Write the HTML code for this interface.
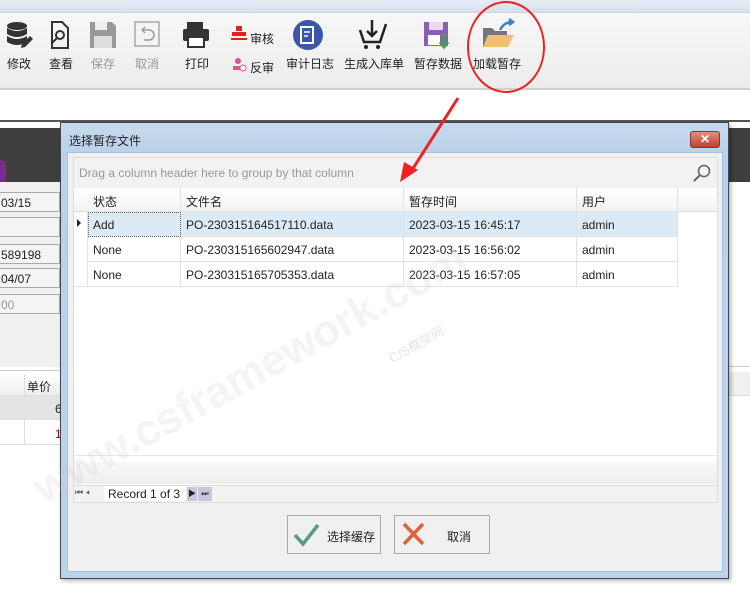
<!DOCTYPE html>
<html><head><meta charset="utf-8"><style>
*{margin:0;padding:0;box-sizing:border-box}
body{width:750px;height:595px;overflow:hidden;background:#fff;position:relative;font-family:"Liberation Sans","Noto Sans CJK SC",sans-serif;font-size:12px;color:#222}
.a{position:absolute}
.lbl{position:absolute;top:55px;font-size:12px;color:#222;white-space:nowrap}
.f{position:absolute;left:0;width:60px;height:20px;border:1px solid #aaa;border-left:none;background:#f4f4f4;font-size:12px;padding:3px 0 0 1px}
.cell{position:absolute;height:25px;border-right:1px solid #e2e2e2;border-bottom:1px solid #e2e2e2;padding:6px 0 0 5px;font-size:12px;white-space:nowrap}
</style></head><body>
<div class="a" style="left:0;top:0;width:750px;height:12px;background:linear-gradient(#e6edf5,#d6e1ed)"></div>
<div class="a" style="left:0;top:12px;width:750px;height:78px;background:linear-gradient(#f7f7f7,#ececec);border-top:1px solid #cdd6e0;border-bottom:2px solid #d0d0d0"></div>
<div class="a" style="left:0;top:120px;width:750px;height:2px;background:#555"></div>

<svg class="a" style="left:0;top:18px" width="560" height="36">
 <g fill="#333"><ellipse cx="17" cy="8" rx="10" ry="4"/><path d="M7 10q10 6 20 0v6q-10 6-20 0z"/><path d="M7 18q10 6 20 0v6q-10 6-20 0z"/></g>
 <path d="M22 26l8-8 3 3-8 8-4 1z" fill="#333"/>
 <path d="M52 4h10l6 6v20h-16z" fill="none" stroke="#333" stroke-width="2"/>
 <circle cx="60" cy="17" r="4" fill="none" stroke="#333" stroke-width="2"/><path d="M57 20l-5 5" stroke="#333" stroke-width="2"/>
 <path d="M90 4h22l4 4v22h-26z" fill="#999"/><rect x="95" y="4" width="12" height="8" fill="#eee"/><rect x="94" y="18" width="18" height="12" fill="#ddd"/>
 <rect x="135" y="4" width="24" height="24" fill="#f4f4f4" stroke="#aaa" stroke-width="1.5"/><path d="M142 12h7a5 5 0 010 10h-5M142 12l3-3M142 12l3 3" fill="none" stroke="#999" stroke-width="1.5"/>
 <rect x="187" y="4" width="16" height="8" fill="#333"/><rect x="183" y="11" width="26" height="12" rx="2" fill="#333"/><rect x="188" y="19" width="16" height="10" fill="#fff" stroke="#333" stroke-width="2"/>
 <path d="M236 8h6v5h-6z M232 14h14v4h-14z" fill="#d22"/><rect x="231" y="20" width="16" height="2" fill="#d22"/>
 <circle cx="308" cy="17" r="15" fill="#3b55a8"/><path d="M301 9h12v16h-12z" fill="none" stroke="#fff" stroke-width="2"/><path d="M304 14h6M304 18h4" stroke="#fff" stroke-width="1.5"/>
 <path d="M372 2v16M367 13l5 5 5-5" fill="none" stroke="#222" stroke-width="2.5"/><path d="M360 12l4 12h16l6-18" fill="none" stroke="#222" stroke-width="2.5"/><circle cx="366" cy="29" r="2" fill="#222"/><circle cx="378" cy="29" r="2" fill="#222"/>
 <path d="M424 4h24v24h-24z" fill="#8b5fb0"/><rect x="429" y="4" width="14" height="8" fill="#e8d8f2"/><rect x="428" y="17" width="12" height="10" fill="#fff"/><path d="M444 16v12M440 24l4 5 4-5" stroke="#4a9a5a" stroke-width="3" fill="none"/>
 <path d="M483 10h9l3 3h12v16h-24z" fill="#777"/><path d="M483 29l5-12h26l-6 12z" fill="#f0c070"/><path d="M500 12q4-8 12-8M509 1l4 3-4 3" fill="none" stroke="#3a80c8" stroke-width="2.5"/>
</svg>
<svg class="a" style="left:230px;top:56px" width="18" height="18"><circle cx="8" cy="5" r="3" fill="#e0509a"/><path d="M3 14h11v-4h-11z" fill="#e0509a"/><circle cx="13" cy="12" r="3" fill="#fff" stroke="#e0509a"/></svg>
<div class="lbl" style="left:7px">修改</div>
<div class="lbl" style="left:49px">查看</div>
<div class="lbl" style="left:91px;color:#999">保存</div>
<div class="lbl" style="left:135px;color:#999">取消</div>
<div class="lbl" style="left:185px">打印</div>
<div class="lbl" style="left:250px;top:30px">审核</div>
<div class="lbl" style="left:250px;top:59px">反审</div>
<div class="lbl" style="left:286px">审计日志</div>
<div class="lbl" style="left:344px">生成入库单</div>
<div class="lbl" style="left:414px">暂存数据</div>
<div class="lbl" style="left:473px">加载暂存</div>

<div class="a" style="left:0;top:128px;width:62px;height:54px;background:#3e3e3e"></div>
<div class="a" style="left:0;top:160px;width:6px;height:22px;background:#7a2a90;border-radius:0 10px 0 0"></div>
<div class="a" style="left:0;top:182px;width:62px;height:185px;background:#f0f0f0"></div>
<div class="f" style="top:192px">03/15</div>
<div class="f" style="top:217px"></div>
<div class="f" style="top:244px">589198</div>
<div class="f" style="top:268px">04/07</div>
<div class="f" style="top:294px;color:#999">00</div>
<div class="a" style="left:0;top:370px;width:62px;height:1px;background:#ccc"></div>
<div class="a" style="left:0;top:374px;width:62px;height:22px;background:linear-gradient(#fff,#eee);border-bottom:1px solid #ddd"></div>
<div class="a" style="left:27px;top:378px">单价</div>
<div class="a" style="left:24px;top:374px;width:1px;height:71px;background:#ddd"></div>
<div class="a" style="left:0;top:396px;width:62px;height:24px;background:#e4e4e4;border-bottom:1px solid #ddd"></div>
<div class="a" style="left:55px;top:402px">6</div>
<div class="a" style="left:0;top:420px;width:62px;height:25px;border-bottom:1px solid #ddd"></div>
<div class="a" style="left:55px;top:427px;color:#800">1</div>
<div class="a" style="left:728px;top:128px;width:22px;height:54px;background:#3e3e3e"></div>
<div class="a" style="left:728px;top:366px;width:22px;height:1px;background:#ccc"></div>
<div class="a" style="left:728px;top:372px;width:22px;height:24px;background:#f0f0f0;border-bottom:1px solid #ddd"></div>

<div class="a" style="left:60px;top:122px;width:669px;height:457px;background:linear-gradient(#c8daee,#b9d1ea 30px,#bcd3ec);border:1px solid #445;box-shadow:2px 2px 4px rgba(0,0,0,.3)"></div>
<div class="a" style="left:69px;top:132px;font-size:12px">选择暂存文件</div>
<div class="a" style="left:690px;top:131px;width:30px;height:17px;border-radius:3px;background:linear-gradient(#e09080,#c0402e);border:1px solid #833;color:#fff;font-size:12px;font-weight:bold;text-align:center;line-height:15px">✕</div>
<div class="a" style="left:67px;top:152px;width:656px;height:420px;background:#f0f0f0;border:1px solid #a9c0d8"></div>
<div class="a" style="left:73px;top:157px;width:645px;height:346px;background:#fff;border:1px solid #ddd"></div>
<div class="a" style="left:74px;top:158px;width:643px;height:30px;background:#f2f2f2"></div>
<div class="a" style="left:79px;top:166px;color:#999">Drag a column header here to group by that column</div>
<svg class="a" style="left:692px;top:163px" width="20" height="20"><circle cx="12" cy="8" r="5.5" fill="none" stroke="#666" stroke-width="1.6"/><path d="M8 12l-6 6" stroke="#666" stroke-width="2"/></svg>
<div class="a" style="left:74px;top:188px;width:643px;height:24px;background:linear-gradient(#fff,#f2f2f2);border-bottom:1px solid #ddd"></div>
<div class="cell" style="left:88px;top:188px;width:93px;height:24px;padding-top:5px">状态</div>
<div class="cell" style="left:181px;top:188px;width:223px;height:24px;padding-top:5px">文件名</div>
<div class="cell" style="left:404px;top:188px;width:173px;height:24px;padding-top:5px">暂存时间</div>
<div class="cell" style="left:577px;top:188px;width:101px;height:24px;padding-top:5px">用户</div>

<div class="a" style="left:88px;top:212px;width:590px;height:25px;background:#dbeaf5"></div>
<div class="a" style="left:77px;top:219px;width:0;height:0;border-left:4px solid #222;border-top:4px solid transparent;border-bottom:4px solid transparent"></div>
<div class="a" style="left:73px;top:212px;width:15px;height:74px;border-right:1px solid #e2e2e2"></div>
<div class="cell" style="left:88px;top:212px;width:93px;outline:1px dotted #666;outline-offset:-1px">Add</div>
<div class="cell" style="left:181px;top:212px;width:223px">PO-230315164517110.data</div>
<div class="cell" style="left:404px;top:212px;width:173px">2023-03-15 16:45:17</div>
<div class="cell" style="left:577px;top:212px;width:101px">admin</div>
<div class="cell" style="left:88px;top:237px;width:93px">None</div>
<div class="cell" style="left:181px;top:237px;width:223px">PO-230315165602947.data</div>
<div class="cell" style="left:404px;top:237px;width:173px">2023-03-15 16:56:02</div>
<div class="cell" style="left:577px;top:237px;width:101px">admin</div>
<div class="cell" style="left:88px;top:262px;width:93px">None</div>
<div class="cell" style="left:181px;top:262px;width:223px">PO-230315165705353.data</div>
<div class="cell" style="left:404px;top:262px;width:173px">2023-03-15 16:57:05</div>
<div class="cell" style="left:577px;top:262px;width:101px">admin</div>
<div class="a" style="left:74px;top:286px;width:604px;height:1px;background:#e2e2e2"></div>

<div class="a" style="left:74px;top:455px;width:643px;height:1px;background:#e6e6e6"></div>
<div class="a" style="left:74px;top:462px;width:643px;height:22px;background:linear-gradient(#f8f8f8,#eee)"></div>
<div class="a" style="left:74px;top:485px;width:643px;height:17px;background:#f2f2f2;border-top:1px solid #ddd"></div>
<div class="a" style="left:75px;top:487px;font-size:9px;color:#555">⏮ ◂</div>
<div class="a" style="left:104px;top:486px;width:82px;height:15px;background:#fff;padding:1px 0 0 4px">Record 1 of 3</div>
<div class="a" style="left:187px;top:487px;width:10px;height:14px;background:#c8c8dc;font-size:8px;text-align:center;line-height:14px">▶</div>
<div class="a" style="left:198px;top:487px;width:14px;height:14px;background:#c8c8dc;font-size:8px;text-align:center;line-height:14px">⏭</div>

<div class="a" style="left:287px;top:515px;width:94px;height:39px;border:1px solid #aaa;background:#f0f0f0"></div>
<svg class="a" style="left:293px;top:521px" width="28" height="28"><path d="M2 14l8 9L25 4" fill="none" stroke="#5a9a88" stroke-width="3.5"/></svg>
<div class="a" style="left:327px;top:528px">选择缓存</div>
<div class="a" style="left:394px;top:515px;width:96px;height:39px;border:1px solid #aaa;background:#f0f0f0"></div>
<svg class="a" style="left:401px;top:521px" width="26" height="26"><path d="M3 3l19 20M22 3L3 23" stroke="#e0603a" stroke-width="3.5"/></svg>
<div class="a" style="left:447px;top:528px">取消</div>

<div class="a" style="left:25px;top:470px;font-size:44px;font-weight:bold;color:rgba(200,200,200,.2);transform:rotate(-29deg);transform-origin:left top;white-space:nowrap">www.csframework.com</div>
<div class="a" style="left:385px;top:350px;font-size:13px;color:rgba(180,180,180,.35);transform:rotate(-29deg);transform-origin:left top;white-space:nowrap">C/S框架网</div>

<svg class="a" style="left:0;top:0" width="750" height="595">
 <ellipse cx="506" cy="47" rx="38" ry="45" fill="none" stroke="#e22" stroke-width="2"/>
 <path d="M458 98L412 170" stroke="#e22" stroke-width="3"/>
 <path d="M400 182l4-20 14 8z" fill="#e22"/>
</svg>
</body></html>
